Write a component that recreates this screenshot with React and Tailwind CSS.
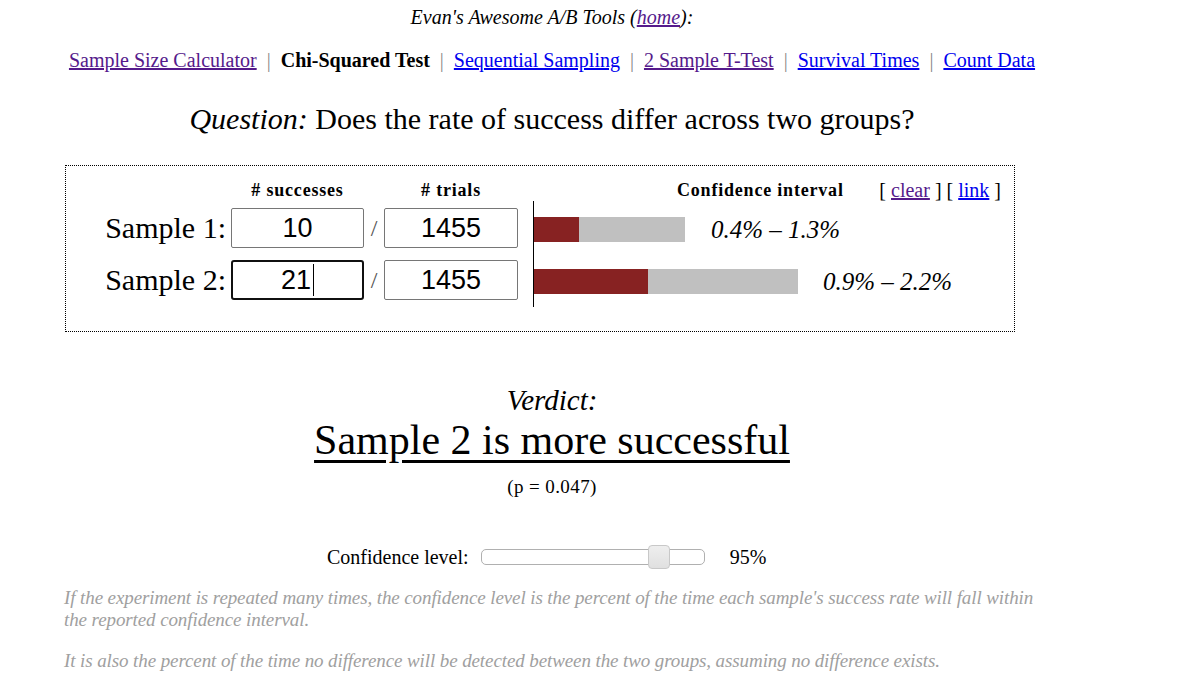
import React from "react";

const navItems = [
  { label: "Sample Size Calculator", visited: true },
  { label: "Chi-Squared Test", current: true },
  { label: "Sequential Sampling" },
  { label: "2 Sample T-Test", visited: true },
  { label: "Survival Times" },
  { label: "Count Data" },
];

const samples = [
  { name: "Sample 1:", successes: "10", trials: "1455", red: "w-[45px]", gray: "w-[106px]", ci: "0.4% – 1.3%", gap: "ml-[26px]" },
  { name: "Sample 2:", successes: "21", trials: "1455", red: "w-[114px]", gray: "w-[150px]", ci: "0.9% – 2.2%", gap: "ml-[25px]", focused: true },
];

function Field({ value, focused }) {
  return (
    <div
      className={
        "flex h-[40px] items-center justify-center bg-white font-['Liberation_Sans',Arial,sans-serif] text-[27px] leading-none text-black " +
        (focused ? "rounded-[3px] border-2 border-[#101010]" : "rounded-[2px] border border-[#767676]")
      }
    >
      <span>{value}</span>
      {focused && <span className="ml-[2px] h-[32px] w-px bg-black" />}
    </div>
  );
}

export default function App() {
  return (
    <div className="min-h-[677px] bg-white font-['Liberation_Serif','Times_New_Roman',serif] text-black">
      <div className="ml-[64px] w-[976px]">
        {/* header */}
        <div className="pt-[5px] text-center text-[20px] italic leading-[24px]">
          Evan's Awesome A/B Tools (
          <a href="#" className="text-[#551a8b] underline">home</a>
          ):
        </div>

        <nav className="mt-[19px] text-center text-[20px] leading-[24px]">
          {navItems.map((item, i) => (
            <React.Fragment key={item.label}>
              {i > 0 && <span className="px-[10px] text-[#888]">|</span>}
              {item.current ? (
                <b>{item.label}</b>
              ) : (
                <a href="#" className={(item.visited ? "text-[#551a8b]" : "text-[#0000ee]") + " underline"}>
                  {item.label}
                </a>
              )}
            </React.Fragment>
          ))}
        </nav>

        <div className="mt-[30px] text-center text-[30px] leading-[34px]">
          <i>Question:</i> Does the rate of success differ across two groups?
        </div>

        {/* input box */}
        <div className="ml-px mt-[29px] w-[950px] border border-dotted border-black pb-[24px] pt-[14px]">
          <div className="flex h-[20px] items-center text-[18px] font-bold leading-[20px] tracking-[0.8px]">
            <div className="w-[165px]" />
            <div className="w-[133px] text-center"># successes</div>
            <div className="w-[20px]" />
            <div className="w-[134px] text-center"># trials</div>
            <div className="ml-[159px]">Confidence interval</div>
            <div className="ml-auto pr-[13px] text-[20px] font-normal tracking-normal">
              [ <a href="#" className="text-[#551a8b] underline">clear</a> ] [{" "}
              <a href="#" className="text-[#0000ee] underline">link</a> ]
            </div>
          </div>

          <div className="mt-px flex">
            <div className="flex flex-col gap-[12px] pb-[7px] pt-[7px]">
              {samples.map((s) => (
                <div key={s.name} className="flex h-[40px] items-center">
                  <div className="w-[160px] text-right text-[30px] leading-none">{s.name}</div>
                  <div className="w-[5px]" />
                  <div className="w-[133px]">
                    <Field value={s.successes} focused={s.focused} />
                  </div>
                  <div className="w-[20px] text-center text-[24px] text-[#555]">/</div>
                  <div className="w-[134px]">
                    <Field value={s.trials} />
                  </div>
                </div>
              ))}
            </div>

            <div className="ml-[15px] w-px bg-black" />

            <div className="flex flex-col gap-[27px] pt-[16px]">
              {samples.map((s) => (
                <div key={s.ci} className="flex h-[25px] items-center">
                  <div className={"h-[25px] bg-[#872222] " + s.red} />
                  <div className={"h-[25px] bg-[#c0c0c0] " + s.gray} />
                  <div className={"text-[25px] italic leading-none " + s.gap}>{s.ci}</div>
                </div>
              ))}
            </div>
          </div>
        </div>

        {/* verdict */}
        <div className="mt-[52px] text-center text-[29px] italic leading-[32px]">Verdict:</div>
        <div className="text-center text-[42px] leading-[48px]">
          <span className="underline decoration-[3px] underline-offset-[6px]">Sample 2 is more successful</span>
        </div>
        <div className="mt-[12px] text-center text-[19px] leading-[22px] tracking-[0.4px]">(p = 0.047)</div>

        {/* confidence slider */}
        <div className="mt-[47px] flex h-[24px] items-center pl-[263px] text-[20px]">
          <span>Confidence level:</span>
          <div className="relative ml-[12px] h-[16px] w-[224px] rounded-[5px] border border-[#b0b0b0] bg-white">
            <div className="absolute left-[166px] top-[-5px] h-[24px] w-[22px] rounded-[4px] border border-[#c8c8c8] bg-gradient-to-b from-[#eeeeee] to-[#e0e0e0]" />
          </div>
          <span className="ml-[25px]">95%</span>
        </div>

        {/* notes */}
        <div className="mt-[18px] w-[985px] text-[19px] italic leading-[22px] tracking-[-0.1px] text-[#a0a0a0]">
          <p>
            If the experiment is repeated many times, the confidence level is the percent of the time each sample's success rate will fall within the reported confidence interval.
          </p>
          <p className="mt-[19px]">
            It is also the percent of the time no difference will be detected between the two groups, assuming no difference exists.
          </p>
        </div>
      </div>
    </div>
  );
}
